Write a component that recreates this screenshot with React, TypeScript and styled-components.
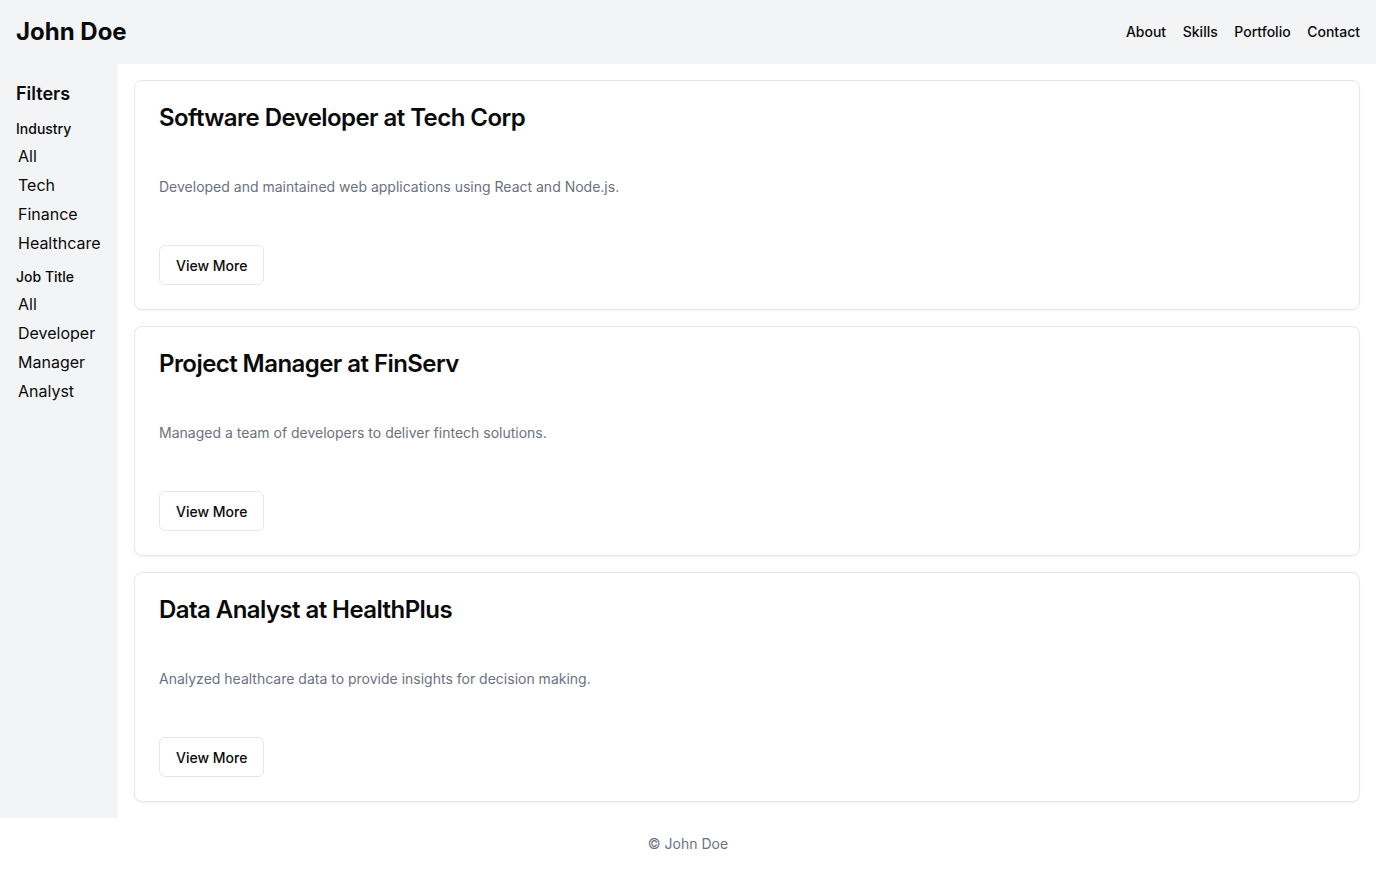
import React from 'react';
import styled, { createGlobalStyle } from 'styled-components';

const GlobalStyle = createGlobalStyle`
  * { box-sizing: border-box; }
  body {
    margin: 0;
    font-family: Inter, 'Noto Sans', sans-serif;
    color: #0a0a0a;
    background: #fff;
  }
`;

const Header = styled.header`
  height: 64px;
  display: flex;
  align-items: center;
  justify-content: space-between;
  padding: 0 16px;
  background: #f3f4f6;
`;

const Brand = styled.h1`
  margin: 0;
  font-size: 24px;
  line-height: 32px;
  font-weight: 700;
  margin-top: -1px;
`;

const Nav = styled.nav`
  display: flex;
  gap: 16.6px;
  margin-top: -1px;
`;

const NavLink = styled.a`
  font-size: 14px;
  font-weight: 500;
  color: #0a0a0a;
  text-decoration: none;
`;

const Body = styled.div`
  display: flex;
`;

const Sidebar = styled.aside`
  width: 118px;
  flex-shrink: 0;
  background: #f3f4f6;
  padding: 16px;
`;

const SideTitle = styled.h2`
  margin: 0 0 11px;
  font-size: 18px;
  line-height: 28px;
  font-weight: 600;
`;

const Section = styled.div`
  & + & {
    margin-top: 9px;
  }
`;

const SectionLabel = styled.h3`
  margin: 0 0 3px;
  font-size: 14px;
  line-height: 20px;
  font-weight: 500;
`;

const FilterItem = styled.div`
  font-size: 16px;
  line-height: 29px;
  padding-left: 2px;
`;

const Main = styled.main`
  flex: 1;
  padding: 16px;
  display: flex;
  flex-direction: column;
  gap: 16px;
`;

const Card = styled.div`
  border: 1px solid #e5e7eb;
  border-radius: 8px;
  padding: 24px;
  background: #fff;
  box-shadow: 0 1px 2px rgba(0, 0, 0, 0.04);
`;

const CardTitle = styled.h3`
  margin: -3px 0 0;
  font-size: 24px;
  line-height: 32px;
  font-weight: 600;
  letter-spacing: -0.56px;
`;

const CardText = styled.p`
  margin: 43px 0 0;
  font-size: 14px;
  line-height: 20px;
  color: #6b7280;
`;

const Button = styled.button`
  margin-top: 48px;
  height: 40px;
  padding: 0 16px;
  border: 1px solid #e5e7eb;
  border-radius: 6px;
  background: #fff;
  font-family: inherit;
  font-size: 14px;
  font-weight: 500;
  color: #0a0a0a;
  cursor: pointer;
`;

const Footer = styled.footer`
  padding: 16px;
  text-align: center;
  font-size: 14px;
  line-height: 20px;
  color: #6b7280;
`;

const jobs = [
  {
    title: 'Software Developer at Tech Corp',
    text: 'Developed and maintained web applications using React and Node.js.',
  },
  {
    title: 'Project Manager at FinServ',
    text: 'Managed a team of developers to deliver fintech solutions.',
  },
  {
    title: 'Data Analyst at HealthPlus',
    text: 'Analyzed healthcare data to provide insights for decision making.',
  },
];

const filters = [
  { label: 'Industry', items: ['All', 'Tech', 'Finance', 'Healthcare'] },
  { label: 'Job Title', items: ['All', 'Developer', 'Manager', 'Analyst'] },
];

const App = () => {
  return (
    <>
      <GlobalStyle />
      <Header>
        <Brand>John Doe</Brand>
        <Nav>
          {['About', 'Skills', 'Portfolio', 'Contact'].map((n) => (
            <NavLink key={n} href="#">
              {n}
            </NavLink>
          ))}
        </Nav>
      </Header>
      <Body>
        <Sidebar>
          <SideTitle>Filters</SideTitle>
          {filters.map((f) => (
            <Section key={f.label}>
              <SectionLabel>{f.label}</SectionLabel>
              {f.items.map((i) => (
                <FilterItem key={i}>{i}</FilterItem>
              ))}
            </Section>
          ))}
        </Sidebar>
        <Main>
          {jobs.map((j) => (
            <Card key={j.title}>
              <CardTitle>{j.title}</CardTitle>
              <CardText>{j.text}</CardText>
              <Button>View More</Button>
            </Card>
          ))}
        </Main>
      </Body>
      <Footer>© John Doe</Footer>
    </>
  );
};

export default App;
